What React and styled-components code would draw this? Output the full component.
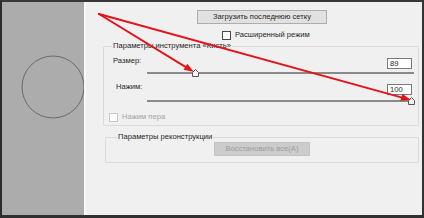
import React from 'react'
import styled, { createGlobalStyle } from 'styled-components'

const GlobalStyle = createGlobalStyle`
html, body {
    margin: 0;
    padding: 0;
}
body {
    width: 424px;
    height: 218px;
    overflow: hidden;
    background: #f0f0f0;
    font-family: "Liberation Sans", Arial, sans-serif;
}
`;

const Arrow = ({ from, to }) => {
    const dx = to[0] - from[0]
    const dy = to[1] - from[1]
    const len = Math.hypot(dx, dy)
    const ux = dx / len
    const uy = dy / len
    const bx = to[0] - ux * 10
    const by = to[1] - uy * 10
    const px = -uy * 3.6
    const py = ux * 3.6
    const head = `${to[0]},${to[1]} ${bx + px},${by + py} ${bx - px},${by - py}`
    return (
        <g>
            <line x1={from[0]} y1={from[1]} x2={bx} y2={by} stroke="#e3141b" strokeWidth="2" strokeLinecap="round" />
            <polygon points={head} fill="#e3141b" />
        </g>
    )
}

const Thumb = () => (
    <svg width="7" height="8" viewBox="0 0 7 8">
        <path d="M3.5 0.5 L6.5 3.5 L6.5 7.5 L0.5 7.5 L0.5 3.5 Z" fill="#f4f4f4" stroke="#555" strokeWidth="1" />
    </svg>
)

const Slider = ({ value, top }) => (
    <Track top={top}>
        <ThumbHolder style={{ left: `${value}%` }}>
            <Thumb />
        </ThumbHolder>
    </Track>
)

const App = () => {
    return (
        <Screen>
            <GlobalStyle />
            <Window>
                <Preview>
                    <svg width="82" height="213">
                        <circle cx="51" cy="85" r="31" fill="none" stroke="#6a6a6a" strokeWidth="1" />
                    </svg>
                </Preview>
                <Side>
                    <Button>Загрузить последнюю сетку</Button>
                    <CheckRow indent={136} gap={4} top={6}>
                        <Box />
                        <Label>Расширенный режим</Label>
                    </CheckRow>
                    <Group left={17} top={1}>
                        <Legend>Параметры инструмента «Кисть»</Legend>
                        <ParamRow top={6}>
                            <Label>Размер:</Label>
                            <Field>89</Field>
                        </ParamRow>
                        <Slider value={18} top={0} />
                        <ParamRow top={6}>
                            <Label pad={3}>Нажим:</Label>
                            <Field>100</Field>
                        </ParamRow>
                        <Slider value={99} top={2} />
                        <CheckRow indent={-4} gap={4} top={7}>
                            <Box disabled />
                            <Label disabled>Нажим пера</Label>
                        </CheckRow>
                    </Group>
                    <Group left={19} top={6}>
                        <Legend pad={2}>Параметры реконструкции</Legend>
                        <ButtonRow>
                            <Button disabled>Восстановить все(A)</Button>
                        </ButtonRow>
                    </Group>
                </Side>
            </Window>
            <Overlay width="424" height="218">
                <Arrow from={[99, 14]} to={[194, 72]} />
                <Arrow from={[99, 14]} to={[411, 100]} />
            </Overlay>
        </Screen>
    )
}

export default App;

const Screen = styled.div`
position: relative;
width: 424px;
height: 218px;
`;
const Window = styled.div`
width: 424px;
height: 218px;
box-sizing: border-box;
display: flex;
border-top: 2px solid #383838;
border-bottom: 3px solid #303030;
border-left: 2px solid #2c2c2c;
border-right: 2px solid #333333;
background: #f0f0f0;
`;
const Preview = styled.div`
width: 82px;
flex-shrink: 0;
background: #acacac;
svg {
    display: block;
}
`;
const Side = styled.div`
flex: 1;
display: flex;
flex-direction: column;
align-items: flex-start;
border-left: 2px solid #f8f8f8;
padding-right: 3px;
font-size: 7.6px;
color: #1e1e1e;
`;
const Button = styled.button`
box-sizing: border-box;
height: 14px;
padding: 0;
margin: 8px 0 0 111px;
border: 1px solid ${({ disabled }) => (disabled ? "#c4c4c4" : "#adadad")};
background: ${({ disabled }) => (disabled ? "#cccccc" : "#e1e1e1")};
color: ${({ disabled }) => (disabled ? "#9c9c9c" : "#1e1e1e")};
font-family: inherit;
font-size: 7.6px;
line-height: 12px;
white-space: nowrap;
width: ${({ disabled }) => (disabled ? "96px" : "130px")};
`;
const ButtonRow = styled.div`
display: flex;
padding: 0 0 3px 99px;
button {
    margin: 0;
}
`;
const CheckRow = styled.div`
display: flex;
align-items: center;
gap: ${({ gap }) => gap}px;
margin: ${({ top }) => top}px 0 0 ${({ indent }) => indent}px;
`;
const Box = styled.span`
width: 7px;
height: 7px;
border: 1px solid ${({ disabled }) => (disabled ? "#c8c8c8" : "#4a4a4a")};
background: #ffffff;
`;
const Label = styled.span`
line-height: 10px;
padding-left: ${({ pad }) => pad || 0}px;
color: ${({ disabled }) => (disabled ? "#a2a2a2" : "#1e1e1e")};
`;
const Group = styled.fieldset`
align-self: stretch;
margin: ${({ top }) => top}px 0 0 ${({ left }) => left}px;
padding: 0 6px 3px 9px;
border: 1px solid #dadada;
border-radius: 1px;
`;
const Legend = styled.legend`
padding: 0 1px;
margin-left: ${({ pad }) => pad || -1}px;
line-height: 10px;
color: #1e1e1e;
`;
const ParamRow = styled.div`
display: flex;
justify-content: space-between;
align-items: flex-start;
height: 12px;
margin-top: ${({ top }) => top}px;
span {
    margin-top: -1px;
}
`;
const Field = styled.div`
box-sizing: border-box;
width: 25px;
height: 11px;
margin-top: 1px;
padding-left: 2px;
border: 1px solid #7a7a7a;
background: #ffffff;
line-height: 9px;
color: #1e1e1e;
`;
const Track = styled.div`
position: relative;
height: 8px;
margin: ${({ top }) => top}px -2px 0 34px;
&::before {
    content: "";
    position: absolute;
    left: 0;
    right: 0;
    top: 3px;
    height: 2px;
    background: #8a8a8a;
}
`;
const ThumbHolder = styled.div`
position: absolute;
top: 0px;
margin-left: -3px;
svg {
    display: block;
}
`;
const Overlay = styled.svg`
position: absolute;
left: 0;
top: 0;
pointer-events: none;
`;
